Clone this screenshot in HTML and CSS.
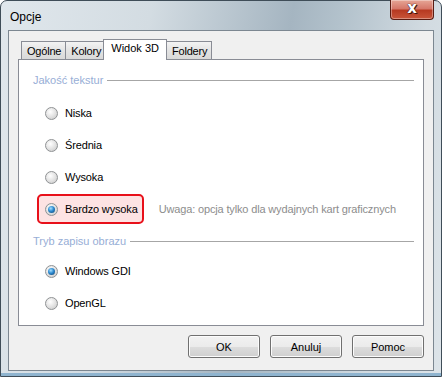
FILE: index.html
```html
<!DOCTYPE html>
<html lang="pl">
<head>
  <meta charset="UTF-8">
  <title>Opcje</title>
  <link rel="stylesheet" href="styles.css">
</head>
<body>
  <div class="window">
    <div class="titlebar">
      <span class="title">Opcje</span>
      <button class="close"><span>x</span></button>
    </div>

    <div class="client">
      <div class="tabs">
        <div class="tab">Ogólne</div>
        <div class="tab">Kolory</div>
        <div class="tab active">Widok 3D</div>
        <div class="tab">Foldery</div>
      </div>

      <div class="panel">
        <div class="legend"><span>Jakość tekstur</span></div>
        <div class="row"><span class="radio"></span>Niska</div>
        <div class="row"><span class="radio"></span>Średnia</div>
        <div class="row"><span class="radio"></span>Wysoka</div>
        <div class="row">
          <span class="highlight"><span class="radio checked"></span>Bardzo wysoka</span>
          <span class="note">Uwaga: opcja tylko dla wydajnych kart graficznych</span>
        </div>

        <div class="legend second"><span>Tryb zapisu obrazu</span></div>
        <div class="row"><span class="radio checked"></span>Windows GDI</div>
        <div class="row"><span class="radio"></span>OpenGL</div>
      </div>

      <div class="buttons">
        <button class="btn">OK</button>
        <button class="btn">Anuluj</button>
        <button class="btn">Pomoc</button>
      </div>
    </div>
  </div>
</body>
</html>
```

FILE: styles.css
```css
/* Dialog window */
body {
  margin: 0;
  background: #fff;
  font-family: 'Liberation Sans', Arial, sans-serif;
  font-size: 11px;
  color: #000;
}

.window {
  width: 442px;
  height: 377px;
  box-sizing: border-box;
  border: 1px solid #3f4d58;
  border-radius: 7px 7px 0 0;
  display: flex;
  flex-direction: column;
  background: linear-gradient(100deg, #e0e7ec 0%, #d3dce2 30%, #a5b5c1 58%, #b3c2cc 68%, #d2dbe1 85%, #dde4e9 100%);
  box-shadow: inset 0 -3px 0 #8fb4cf;
}

.titlebar {
  height: 29px;
  display: flex;
  align-items: flex-start;
}

.title {
  font-size: 12px;
  margin: 9px 0 0 9px;
}

.close {
  margin: -1px 7px 0 auto;
  width: 44px;
  height: 20px;
  border: 1px solid #5a1c12;
  border-top: none;
  border-radius: 0 0 4px 4px;
  background: linear-gradient(#e6a696 0%, #d6786a 45%, #b73a22 55%, #c9553a 100%);
  box-shadow: inset 0 0 0 1px rgba(255, 255, 255, 0.35);
  padding: 0;
  display: flex;
  align-items: center;
  justify-content: center;
}

.close span {
  color: #fff;
  font-family: 'DejaVu Sans', sans-serif;
  font-weight: bold;
  font-size: 15px;
  line-height: 15px;
  margin-top: -2px;
  text-shadow: 0 0 1px #3a0d05, 0 0 1px #3a0d05, 1px 1px 0 #4a140a;
}

/* Client area */
.client {
  flex: 1;
  margin: 0 7px 5px;
  border: 1px solid #7c8791;
  background: #f0f0f0;
  padding: 8px 9px 12px;
  display: flex;
  flex-direction: column;
}

.tabs {
  height: 20px;
  display: flex;
  align-items: flex-end;
  padding-left: 3px;
}

.tab {
  height: 18px;
  box-sizing: border-box;
  padding: 0 4px 0 5px;
  line-height: 18px;
  border: 1px solid #898c95;
  border-bottom: none;
  margin-right: -1px;
  background: linear-gradient(#f3f3f3, #e3e3e3 50%, #d9d9d9);
  white-space: nowrap;
  letter-spacing: -0.2px;
}

.tab.active {
  position: relative;
  z-index: 1;
  height: 21px;
  margin: 0 -1px -1px -2px;
  padding: 0 7px;
  line-height: 17px;
  background: #fff;
  letter-spacing: 0;
}

.panel {
  flex: 1;
  border: 1px solid #898c95;
  background: #fff;
  padding-top: 12px;
}

.legend {
  height: 16px;
  margin: 0 9px 9px 14px;
  display: flex;
  align-items: center;
  color: #97aed6;
  white-space: nowrap;
}

.legend::after {
  content: "";
  flex: 1;
  height: 1px;
  margin-left: 4px;
  background: #a6a6a6;
}

.legend.second {
  margin-top: 8px;
  margin-bottom: 6px;
}

.row {
  height: 32px;
  display: flex;
  align-items: center;
  padding-left: 26px;
  white-space: nowrap;
  letter-spacing: -0.15px;
}

.radio {
  width: 13px;
  height: 13px;
  flex-shrink: 0;
  box-sizing: border-box;
  border-radius: 50%;
  border: 1px solid #8f9294;
  background: radial-gradient(circle at 40% 35%, #ffffff 0%, #e6e6e6 45%, #c5c5c5 100%);
  margin-right: 7px;
  display: flex;
  align-items: center;
  justify-content: center;
}

.radio.checked::after {
  content: "";
  width: 7px;
  height: 7px;
  border-radius: 50%;
  background: radial-gradient(circle at 40% 35%, #a6e0ff 0%, #2d8ad0 45%, #0b3a66 100%);
}

.highlight {
  display: flex;
  align-items: center;
  height: 26px;
  margin-left: -8px;
  padding: 0 4px 0 6px;
  border: 2px solid #e8101a;
  border-radius: 5px;
  background: #fde3e3;
}

.note {
  margin-left: 15px;
  color: #8d8d8d;
}

/* Bottom buttons */
.buttons {
  display: flex;
  justify-content: flex-end;
  gap: 10px;
  margin-top: 9px;
}

.btn {
  width: 72px;
  height: 23px;
  border: 1px solid #707070;
  border-radius: 3px;
  background: linear-gradient(#f2f2f2 0%, #ebebeb 50%, #dddddd 51%, #cfcfcf 100%);
  box-shadow: inset 0 0 0 1px #fcfcfc;
  font-family: 'Liberation Sans', Arial, sans-serif;
  font-size: 11px;
  color: #000;
  padding: 0;
}
```
